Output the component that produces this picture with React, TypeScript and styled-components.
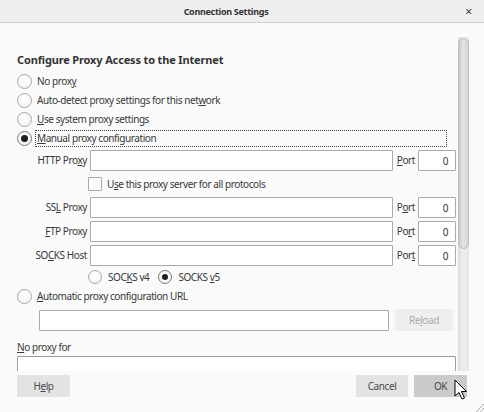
import React from "react";
import styled, { createGlobalStyle } from "styled-components";

const GlobalStyle = createGlobalStyle`
  html, body {
    margin: 0;
    padding: 0;
    background: #fafafa;
  }
  body {
    font-family: "Noto Sans", "DejaVu Sans", sans-serif;
  }
`;

const Window = styled.div`
  position: relative;
  width: 484px;
  height: 412px;
  background: #fafafa;
  color: #383838;
  font-size: 10px;
  letter-spacing: -0.42px;
  display: flex;
  flex-direction: column;
  overflow: hidden;
`;

const TitleBar = styled.div`
  flex: none;
  height: 22px;
  background: #efefef;
  border-bottom: 1px solid #cfcfcf;
  display: grid;
  grid-template-columns: 1fr auto 1fr;
  align-items: center;
`;

const Title = styled.div`
  grid-column: 2;
  margin-right: 32px;
  font-weight: 700;
  font-size: 9px;
  letter-spacing: -0.3px;
  color: #333;
`;

const CloseButton = styled.div`
  justify-self: end;
  margin-right: 12px;
  font-size: 13px;
  line-height: 1;
  color: #444;
`;

const Body = styled.div`
  flex: none;
  height: 334px;
  margin-top: 14px;
  display: flex;
`;

const Content = styled.div`
  flex: 1;
  overflow: hidden;
  padding: 15px 2px 0 17px;
`;

const Scrollbar = styled.div`
  flex: none;
  width: 11px;
  margin-right: 15px;
  background: linear-gradient(to right, #dcdcdc, #eeeeee 40%, #e6e6e6);
  display: flex;
  flex-direction: column;
`;

const Thumb = styled.div`
  height: 209px;
  margin-top: 1px;
  border-radius: 6px;
  border: 1px solid #bdbdbd;
  background: linear-gradient(to right, #c9c9c9, #e4e4e4 45%, #d6d6d6);
`;

const Heading = styled.div`
  font-weight: 700;
  font-size: 11px;
  letter-spacing: -0.15px;
  line-height: 16px;
  color: #333;
  margin-bottom: 4px;
`;

const RadioRow = styled.div<{ $top?: number }>`
  height: 19px;
  display: flex;
  align-items: center;
  gap: 5px;
  margin-top: ${(p) => p.$top ?? 0}px;
`;

const RadioCircle = styled.span<{ $checked?: boolean }>`
  flex: none;
  box-sizing: border-box;
  width: 15px;
  height: 15px;
  border-radius: 50%;
  border: 1px solid ${(p) => (p.$checked ? "#7a7a7a" : "#a8a8a8")};
  background: radial-gradient(circle at 50% 40%, #ffffff, #f0f0f0);
  display: flex;
  align-items: center;
  justify-content: center;
  &::after {
    content: "";
    display: ${(p) => (p.$checked ? "block" : "none")};
    width: 7px;
    height: 7px;
    border-radius: 50%;
    background: #1e1e1e;
  }
`;

const Label = styled.span<{ $focused?: boolean }>`
  white-space: nowrap;
  line-height: 15px;
  ${(p) =>
    p.$focused &&
    `
    flex: 1;
    margin-left: -2px;
    margin-right: 9px;
    padding-left: 1px;
    border: 1px dotted #444;
  `}
`;

const Mn = styled.span`
  text-decoration: underline;
  text-underline-offset: 1px;
`;

const ProxyGrid = styled.div`
  margin-top: 2px;
  margin-left: 13px;
  display: grid;
  grid-template-columns: 57px 303px 19px 38px;
  column-gap: 3px;
  row-gap: 3px;
  align-items: center;
`;

const FieldLabel = styled.span`
  text-align: right;
  white-space: nowrap;
  line-height: 21px;
`;

const TextInput = styled.div<{ $width?: number }>`
  box-sizing: border-box;
  height: 21px;
  ${(p) => (p.$width ? `width: ${p.$width}px;` : "")}
  background: #ffffff;
  border: 1px solid #a9a9a9;
  border-radius: 1px;
  padding: 0 7px;
  display: flex;
  align-items: center;
  justify-content: flex-end;
`;

const FullRow = styled.div<{ $height: number }>`
  grid-column: 2 / 5;
  height: ${(p) => p.$height}px;
  margin-left: -2px;
  display: flex;
  align-items: center;
  gap: 5px;
`;

const CheckBox = styled.span`
  flex: none;
  box-sizing: border-box;
  width: 14px;
  height: 14px;
  border: 1px solid #aaaaaa;
  border-radius: 1px;
  background: #fbfbfb;
`;

const SocksOption = styled.span`
  display: flex;
  align-items: center;
  gap: 6px;
  margin-right: 4px;
`;

const SmallRadio = styled(RadioCircle)`
  width: 14px;
  height: 14px;
  &::after {
    width: 6px;
    height: 6px;
  }
`;

const UrlRow = styled.div`
  margin-top: 3px;
  margin-left: 22px;
  display: flex;
  align-items: center;
  gap: 6px;
`;

const Button = styled.div<{ $width: number; $disabled?: boolean; $hover?: boolean }>`
  flex: none;
  width: ${(p) => p.$width}px;
  height: 22px;
  display: flex;
  align-items: center;
  justify-content: center;
  background: ${(p) => (p.$hover ? "#cbcbcb" : p.$disabled ? "#efefef" : "#e3e3e3")};
  color: ${(p) => (p.$disabled ? "#ababab" : "#4a4a4a")};
`;

const NoProxyLabel = styled.div`
  margin-top: 9px;
  line-height: 14px;
`;

const NoProxyArea = styled(TextInput)`
  margin-top: 2px;
  height: 40px;
  border-color: #9c9c9c;
`;

const Footer = styled.div`
  flex: 1;
  display: flex;
  align-items: flex-start;
  padding: 4px 17px 0 17px;
  gap: 6px;
`;

const Spacer = styled.div`
  flex: 1;
`;

const Cursor = styled.svg`
  position: absolute;
  left: 454px;
  top: 379px;
`;

const Grip = styled.svg`
  position: absolute;
  right: 0;
  bottom: 0;
`;

type PortProps = { pre: string; mn: string; post: string };

const ProxyField = ({
  label,
  port,
}: {
  label: React.ReactNode;
  port: PortProps;
}) => (
  <>
    <FieldLabel>{label}</FieldLabel>
    <TextInput />
    <FieldLabel>
      {port.pre}
      <Mn>{port.mn}</Mn>
      {port.post}
    </FieldLabel>
    <TextInput>0</TextInput>
  </>
);

export default function App() {
  return (
    <Window>
      <GlobalStyle />
      <TitleBar>
        <Title>Connection Settings</Title>
        <CloseButton>×</CloseButton>
      </TitleBar>
      <Body>
        <Content>
          <Heading>Configure Proxy Access to the Internet</Heading>
          <RadioRow>
            <RadioCircle />
            <Label>
              No prox<Mn>y</Mn>
            </Label>
          </RadioRow>
          <RadioRow>
            <RadioCircle />
            <Label>
              Auto-detect proxy settings for this net<Mn>w</Mn>ork
            </Label>
          </RadioRow>
          <RadioRow>
            <RadioCircle />
            <Label>
              <Mn>U</Mn>se system proxy settings
            </Label>
          </RadioRow>
          <RadioRow>
            <RadioCircle $checked />
            <Label $focused>
              <Mn>M</Mn>anual proxy configuration
            </Label>
          </RadioRow>

          <ProxyGrid>
            <ProxyField
              label={
                <>
                  HTTP Pro<Mn>x</Mn>y
                </>
              }
              port={{ pre: "", mn: "P", post: "ort" }}
            />
            <FullRow $height={20}>
              <CheckBox />
              <Label>
                U<Mn>s</Mn>e this proxy server for all protocols
              </Label>
            </FullRow>
            <ProxyField
              label={
                <>
                  SS<Mn>L</Mn> Proxy
                </>
              }
              port={{ pre: "P", mn: "o", post: "rt" }}
            />
            <ProxyField
              label={
                <>
                  <Mn>F</Mn>TP Proxy
                </>
              }
              port={{ pre: "Po", mn: "r", post: "t" }}
            />
            <ProxyField
              label={
                <>
                  SO<Mn>C</Mn>KS Host
                </>
              }
              port={{ pre: "Por", mn: "t", post: "" }}
            />
            <FullRow $height={16}>
              <SocksOption>
                <SmallRadio />
                <Label>
                  SOC<Mn>K</Mn>S v4
                </Label>
              </SocksOption>
              <SocksOption>
                <SmallRadio $checked />
                <Label>
                  SOCKS <Mn>v</Mn>5
                </Label>
              </SocksOption>
            </FullRow>
          </ProxyGrid>

          <RadioRow $top={2}>
            <RadioCircle />
            <Label>
              <Mn>A</Mn>utomatic proxy configuration URL
            </Label>
          </RadioRow>
          <UrlRow>
            <TextInput $width={350} />
            <Button $width={58} $disabled>
              Re<Mn>l</Mn>oad
            </Button>
          </UrlRow>

          <NoProxyLabel>
            <Mn>N</Mn>o proxy for
          </NoProxyLabel>
          <NoProxyArea />
        </Content>
        <Scrollbar>
          <Thumb />
        </Scrollbar>
      </Body>
      <Footer>
        <Button $width={53}>
          H<Mn>e</Mn>lp
        </Button>
        <Spacer />
        <Button $width={52}>Cancel</Button>
        <Button $width={53} $hover>
          OK
        </Button>
      </Footer>

      <Cursor width="14" height="22" viewBox="0 0 14 22">
        <path
          d="M1 1 L1 17 L5 13.5 L8 20 L10.5 19 L7.5 12.5 L12.5 12.5 Z"
          fill="#ffffff"
          stroke="#000000"
          strokeWidth="1"
          strokeLinejoin="round"
        />
      </Cursor>
      <Grip width="10" height="10" viewBox="0 0 10 10">
        <line x1="2" y1="10" x2="10" y2="2" stroke="#b0b0b0" strokeWidth="1" />
        <line x1="6" y1="10" x2="10" y2="6" stroke="#b0b0b0" strokeWidth="1" />
      </Grip>
    </Window>
  );
}
